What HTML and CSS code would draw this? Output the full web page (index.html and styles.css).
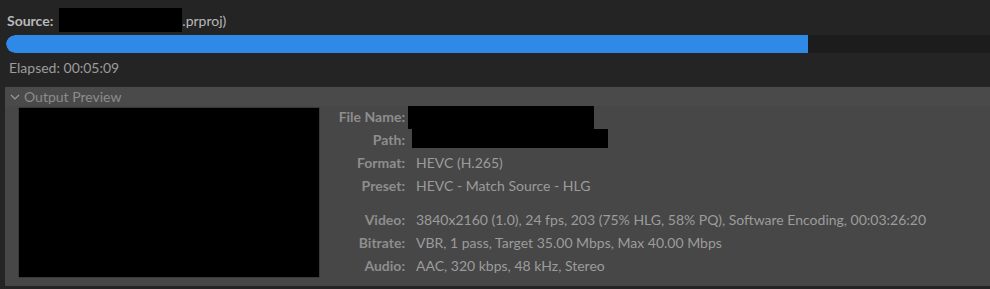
FILE: index.html
```html
<!DOCTYPE html>
<html lang="en">
<head>
<meta charset="UTF-8">
<title>Encoding</title>
<link rel="stylesheet" href="styles.css">
</head>
<body>

<div class="source">
  <span class="source-label">Source:</span>
  <span class="redact redact-source"></span>
  <span class="source-name">.prproj)</span>
</div>

<div class="progress">
  <div class="progress-fill" style="width: 81.5%;"></div>
</div>

<div class="elapsed">Elapsed: 00:05:09</div>

<div class="panel">
  <div class="panel-head">
    <svg class="chevron" width="10" height="6" viewBox="0 0 10 6"><path d="M1 1 L5 5 L9 1" fill="none" stroke="#9a9a9a" stroke-width="1.2"/></svg>
    <span>Output Preview</span>
  </div>
  <div class="panel-body">
    <div class="preview"></div>
    <div class="info">
      <div class="label">File Name:</div><div class="value"><span class="redact redact-file"></span></div>
      <div class="label">Path:</div><div class="value"><span class="redact redact-path"></span></div>
      <div class="label">Format:</div><div class="value">HEVC (H.265)</div>
      <div class="label">Preset:</div><div class="value">HEVC - Match Source - HLG</div>
      <div class="spacer"></div><div class="spacer"></div>
      <div class="label">Video:</div><div class="value">3840x2160 (1.0), 24 fps, 203 (75% HLG, 58% PQ), Software Encoding, 00:03:26:20</div>
      <div class="label">Bitrate:</div><div class="value">VBR, 1 pass, Target 35.00 Mbps, Max 40.00 Mbps</div>
      <div class="label">Audio:</div><div class="value">AAC, 320 kbps, 48 kHz, Stereo</div>
    </div>
  </div>
</div>

</body>
</html>
```

FILE: styles.css
```css
body {
  margin: 0;
  background-color: #242424;
  font-family: Lato, "Open Sans", sans-serif;
  font-size: 14px;
  color: #a8a8a8;
  overflow: hidden;
}
.source {
  display: flex;
  align-items: center;
  height: 24px;
  padding: 8px 0 0 7px;
  color: #b8b8b8;
}
.source-label {
  font-weight: bold;
  margin-right: 6px;
}
.redact {
  display: inline-block;
  background-color: #000;
}
.redact-source {
  width: 123px;
  height: 24px;
}
.progress {
  margin: 3px 0 0 6px;
  height: 18px;
  background-color: #1c1c1c;
  border-radius: 9px 0 0 9px;
  overflow: hidden;
}
.progress-fill {
  height: 100%;
  background-color: #2e8ae6;
  border-radius: 9px 0 0 9px;
}
.elapsed {
  padding: 6px 0 0 9px;
  height: 21px;
  color: #9c9c9c;
}
.panel {
  margin: 7px 0 0 5px;
  height: 199px;
  background-color: #474747;
}
.panel-head {
  display: flex;
  align-items: center;
  gap: 4px;
  height: 19px;
  padding-left: 5px;
  color: #8c8c8c;
  background-color: #4a4a4a;
}
.panel-body {
  display: flex;
  padding: 1px 0 0 13px;
}
.preview {
  width: 300px;
  height: 169px;
  background-color: #000;
  border: 1px solid #3a3a3a;
  flex-shrink: 0;
}
.info {
  display: grid;
  grid-template-columns: 72px 1fr;
  column-gap: 11px;
  align-content: start;
  margin: -2px 0 0 13px;
}
.label {
  text-align: right;
  font-weight: bold;
  color: #8e8e8e;
  height: 23px;
  line-height: 23px;
}
.value {
  color: #9c9c9c;
  height: 23px;
  line-height: 23px;
  white-space: nowrap;
}
.spacer {
  height: 11px;
}
.redact-file {
  width: 186px;
  height: 23px;
  margin: 1px 0 0 -8px;
  vertical-align: top;
}
.redact-path {
  width: 196px;
  height: 19px;
  margin: 1px 0 0 -4px;
  vertical-align: top;
}
```
